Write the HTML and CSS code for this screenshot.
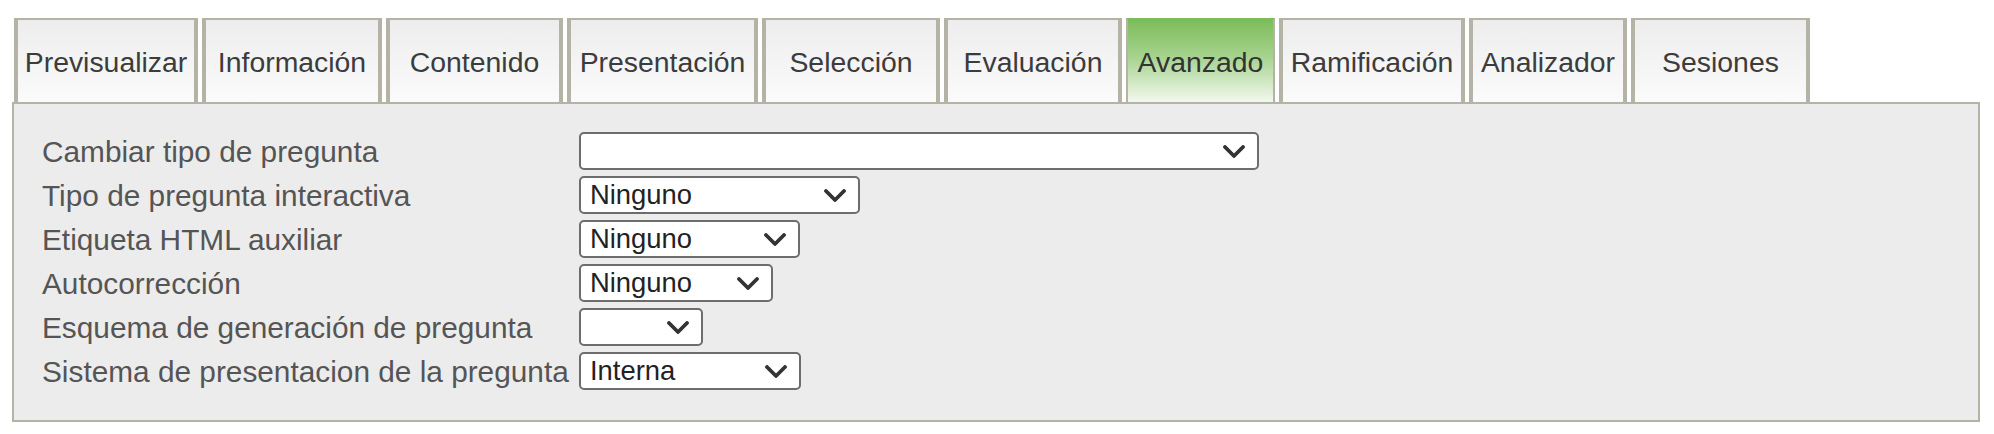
FILE: index.html
```html
<!DOCTYPE html>
<html lang="es">
<head>
<meta charset="utf-8">
<title>Avanzado</title>
<link rel="stylesheet" href="styles.css">
</head>
<body>
<div class="page">
  <nav class="tabs">
    <div class="tab t1">Previsualizar</div>
    <div class="tab t2">Información</div>
    <div class="tab t3">Contenido</div>
    <div class="tab t4">Presentación</div>
    <div class="tab t5">Selección</div>
    <div class="tab t6">Evaluación</div>
    <div class="tab t7 active">Avanzado</div>
    <div class="tab t8">Ramificación</div>
    <div class="tab t9">Analizador</div>
    <div class="tab t10">Sesiones</div>
  </nav>
  <section class="panel">
    <div class="form">
      <label class="lbl">Cambiar tipo de pregunta</label>
      <div class="sel w1"><span class="val"></span><svg class="chev" viewBox="0 0 22 13"><path d="M2 2 L11 11 L20 2"/></svg></div>

      <label class="lbl">Tipo de pregunta interactiva</label>
      <div class="sel w2"><span class="val">Ninguno</span><svg class="chev" viewBox="0 0 22 13"><path d="M2 2 L11 11 L20 2"/></svg></div>

      <label class="lbl">Etiqueta HTML auxiliar</label>
      <div class="sel w3"><span class="val">Ninguno</span><svg class="chev" viewBox="0 0 22 13"><path d="M2 2 L11 11 L20 2"/></svg></div>

      <label class="lbl">Autocorrección</label>
      <div class="sel w4"><span class="val">Ninguno</span><svg class="chev" viewBox="0 0 22 13"><path d="M2 2 L11 11 L20 2"/></svg></div>

      <label class="lbl">Esquema de generación de pregunta</label>
      <div class="sel w5"><span class="val"></span><svg class="chev" viewBox="0 0 22 13"><path d="M2 2 L11 11 L20 2"/></svg></div>

      <label class="lbl">Sistema de presentacion de la pregunta</label>
      <div class="sel w6"><span class="val">Interna</span><svg class="chev" viewBox="0 0 22 13"><path d="M2 2 L11 11 L20 2"/></svg></div>
    </div>
  </section>
</div>
</body>
</html>
```

FILE: styles.css
```css
html, body {
  margin: 0;
  padding: 0;
  background: #ffffff;
}

body {
  font-family: "Liberation Sans", Arial, sans-serif;
}

.page {
  padding: 18px 14px 0 12px;
}

.tabs {
  display: flex;
  gap: 4px;
  padding-left: 2px;
}

.tab {
  box-sizing: border-box;
  height: 84px;
  display: flex;
  align-items: center;
  justify-content: center;
  padding-top: 2px;
  border-top: 2px solid #b4b3a5;
  border-left: 4px solid #b4b3a5;
  border-right: 4px solid #b4b3a5;
  background: linear-gradient(to bottom, #ededed 0%, #f4f4f4 50%, #fbfbfb 100%);
  color: #3c3c3c;
  font-size: 28.4px;
  white-space: nowrap;
}

.tab.active {
  border-top-color: #7cbc5a;
  border-left-width: 2px;
  border-right-width: 2px;
  background: linear-gradient(to bottom, #7dbd5b 0%, #a6d38e 45%, #f2f8ee 100%);
  color: #333333;
}

.t1 { width: 184px; }
.t2 { width: 180px; }
.t3 { width: 177px; }
.t4 { width: 191px; }
.t5 { width: 178px; }
.t6 { width: 178px; }
.t7 { width: 149px; }
.t8 { width: 186px; }
.t9 { width: 158px; }
.t10 { width: 179px; }

.panel {
  box-sizing: border-box;
  height: 320px;
  border: 2px solid #b4b3a5;
  background: #ececec;
  padding: 28px 28px 30px 28px;
}

.form {
  display: grid;
  grid-template-columns: 537px auto;
  row-gap: 6px;
  align-items: center;
  justify-items: start;
}

.lbl {
  font-size: 29.8px;
  color: #555555;
  white-space: nowrap;
  line-height: 36px;
  padding-top: 2px;
}

.sel {
  box-sizing: border-box;
  height: 38px;
  border: 2px solid #6d6d6d;
  border-radius: 5px;
  background: #ffffff;
  display: flex;
  align-items: center;
  justify-content: space-between;
  padding: 0 12px 0 9px;
}

.val {
  font-size: 27.4px;
  color: #222222;
  line-height: 34px;
}

.chev {
  width: 22px;
  height: 13px;
  flex: none;
}

.chev path {
  fill: none;
  stroke: #333333;
  stroke-width: 3.8;
  stroke-linecap: round;
  stroke-linejoin: round;
}

.w1 { width: 680px; }
.w2 { width: 281px; }
.w3 { width: 221px; }
.w4 { width: 194px; }
.w5 { width: 124px; }
.w6 { width: 222px; }
```
